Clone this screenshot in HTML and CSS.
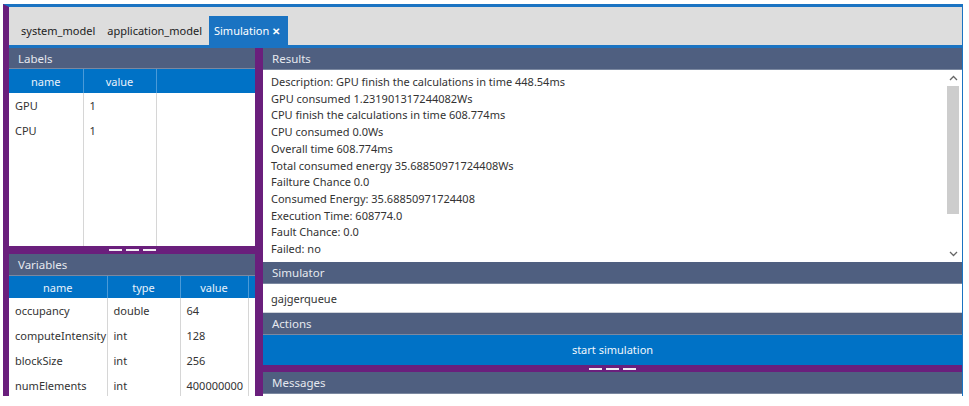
FILE: index.html
```html
<!DOCTYPE html>
<html lang="en">
<head>
  <meta charset="UTF-8" />
  <title>Simulation</title>
  <link rel="stylesheet" href="styles.css">
</head>
<body>
  <div class="window">
    <div class="tabs">
      <div class="tab">system_model</div>
      <div class="tab">application_model</div>
      <div class="tab active">Simulation <span class="close">&#x2715;</span></div>
    </div>
    <div class="main">
      <div class="left">
        <div class="panel labels">
          <div class="header">Labels</div>
          <table class="grid">
            <colgroup><col style="width:74px"><col style="width:73px"><col></colgroup>
            <thead><tr><th>name</th><th>value</th><th></th></tr></thead>
            <tbody>
              <tr><td>GPU</td><td>1</td><td></td></tr>
              <tr><td>CPU</td><td>1</td><td></td></tr>
              <tr class="fill"><td></td><td></td><td></td></tr>
            </tbody>
          </table>
        </div>
        <div class="splitter"><span></span><span></span><span></span></div>
        <div class="panel variables">
          <div class="header">Variables</div>
          <table class="grid">
            <colgroup><col style="width:98px"><col style="width:73px"><col style="width:68px"><col></colgroup>
            <thead><tr><th>name</th><th>type</th><th>value</th><th></th></tr></thead>
            <tbody>
              <tr><td>occupancy</td><td>double</td><td>64</td><td></td></tr>
              <tr><td>computeIntensity</td><td>int</td><td>128</td><td></td></tr>
              <tr><td>blockSize</td><td>int</td><td>256</td><td></td></tr>
              <tr><td>numElements</td><td>int</td><td>400000000</td><td></td></tr>
            </tbody>
          </table>
        </div>
      </div>
      <div class="vsplit"></div>
      <div class="right">
        <div class="header">Results</div>
        <div class="results">
          <div class="lines">
            <div>Description: GPU finish the calculations in time 448.54ms</div>
            <div>GPU consumed 1.231901317244082Ws</div>
            <div>CPU finish the calculations in time 608.774ms</div>
            <div>CPU consumed 0.0Ws</div>
            <div>Overall time 608.774ms</div>
            <div>Total consumed energy 35.68850971724408Ws</div>
            <div>Failture Chance 0.0</div>
            <div>Consumed Energy: 35.68850971724408</div>
            <div>Execution Time: 608774.0</div>
            <div>Fault Chance: 0.0</div>
            <div>Failed: no</div>
          </div>
          <div class="scrollbar">
            <svg width="9" height="6" viewBox="0 0 9 6"><path d="M1 5 L4.5 1.5 L8 5" fill="none" stroke="#666" stroke-width="1.3"/></svg>
            <div class="track"><div class="thumb"></div></div>
            <svg width="9" height="6" viewBox="0 0 9 6"><path d="M1 1 L4.5 4.5 L8 1" fill="none" stroke="#666" stroke-width="1.3"/></svg>
          </div>
        </div>
        <div class="header">Simulator</div>
        <div class="field">gajgerqueue</div>
        <div class="header">Actions</div>
        <div class="button">start simulation</div>
        <div class="splitter small"><span></span><span></span><span></span></div>
        <div class="header">Messages</div>
        <div class="messages"></div>
      </div>
    </div>
  </div>
</body>
</html>
```

FILE: styles.css
```css
body {
  margin: 0;
  background: #fff;
  font-family: "Noto Sans", "Open Sans", sans-serif;
  font-size: 11px;
  color: #333;
}
.window {
  margin: 4px 0 0 3px;
  width: 953px;
  height: 389px;
  border-top: 3px solid #1a73c2;
  border-left: 6px solid #6a1f7c;
  border-right: 1px solid #1a73c2;
  overflow: hidden;
  display: flex;
  flex-direction: column;
}
.tabs {
  height: 38px;
  flex-shrink: 0;
  background: #dddddd;
  border-bottom: 3px solid #1a73c2;
  display: flex;
  align-items: flex-end;
  padding-left: 6px;
}
.tab {
  height: 29px;
  line-height: 29px;
  padding: 0 6px;
  color: #222;
}
.tab.active {
  background: #1a73c2;
  color: #fff;
  margin-left: 1px;
  padding: 0 8px 0 5px;
}
.close {
  font-size: 10px;
  font-weight: bold;
}
.main {
  flex: 1;
  display: flex;
  min-height: 0;
}
.left {
  width: 246px;
  display: flex;
  flex-direction: column;
}
.vsplit {
  width: 8px;
  background: #6a1f7c;
}
.right {
  flex: 1;
  display: flex;
  flex-direction: column;
}
.header {
  height: 22px;
  flex-shrink: 0;
  line-height: 22px;
  background: #4f5f80;
  color: #e6e9ef;
  padding-left: 9px;
  border-bottom: 1px solid #7b88a0;
  box-sizing: border-box;
  font-size: 11.5px;
}
.panel {
  display: flex;
  flex-direction: column;
  background: #fff;
}
.labels {
  height: 198px;
  flex-shrink: 0;
}
.labels .header {
  height: 21px;
  line-height: 21px;
}
.variables {
  flex: 1;
  min-height: 0;
  overflow: hidden;
}
.grid {
  border-collapse: collapse;
  table-layout: fixed;
  width: 100%;
}
.labels .grid {
  flex: 1;
}
.grid th {
  background: #0072c6;
  color: #eaf3fb;
  font-weight: normal;
  height: 22px;
  padding: 0;
  border-left: 1px solid #4a9ad8;
  text-align: center;
}
.grid th:first-child {
  border-left: none;
}
.grid td {
  height: 25px;
  padding: 0 6px;
  border-left: 1px solid #d6d6d6;
  white-space: nowrap;
  overflow: hidden;
}
.grid td:first-child {
  border-left: none;
}
.labels thead th {
  height: 24px;
}
.grid tr.fill td {
  height: auto;
}
.splitter {
  height: 8px;
  flex-shrink: 0;
  background: #6a1f7c;
  display: flex;
  justify-content: center;
  align-items: center;
  gap: 4px;
}
.splitter span {
  width: 13px;
  height: 2px;
  background: #f2eef4;
}
.splitter.small {
  height: 7px;
}
.results {
  height: 192px;
  flex-shrink: 0;
  display: flex;
  background: #fff;
}
.lines {
  flex: 1;
  padding: 4px 8px;
  line-height: 16.7px;
}
.scrollbar {
  width: 14px;
  margin-right: 2px;
  display: flex;
  flex-direction: column;
  align-items: center;
  padding: 5px 0 5px;
}
.scrollbar .track {
  flex: 1;
  width: 100%;
  padding: 5px 0 37px;
}
.scrollbar .thumb {
  height: 100%;
  background: #cdcdcd;
  margin: 0 1px;
}
.field {
  height: 29px;
  flex-shrink: 0;
  line-height: 30px;
  padding-left: 8px;
  background: #fff;
  border-bottom: 1px solid #cfd3da;
  box-sizing: border-box;
}
.button {
  height: 30px;
  flex-shrink: 0;
  line-height: 30px;
  background: #0072c6;
  color: #f0f6fc;
  text-align: center;
}
.messages {
  flex: 1;
  background: #fff;
}
```
